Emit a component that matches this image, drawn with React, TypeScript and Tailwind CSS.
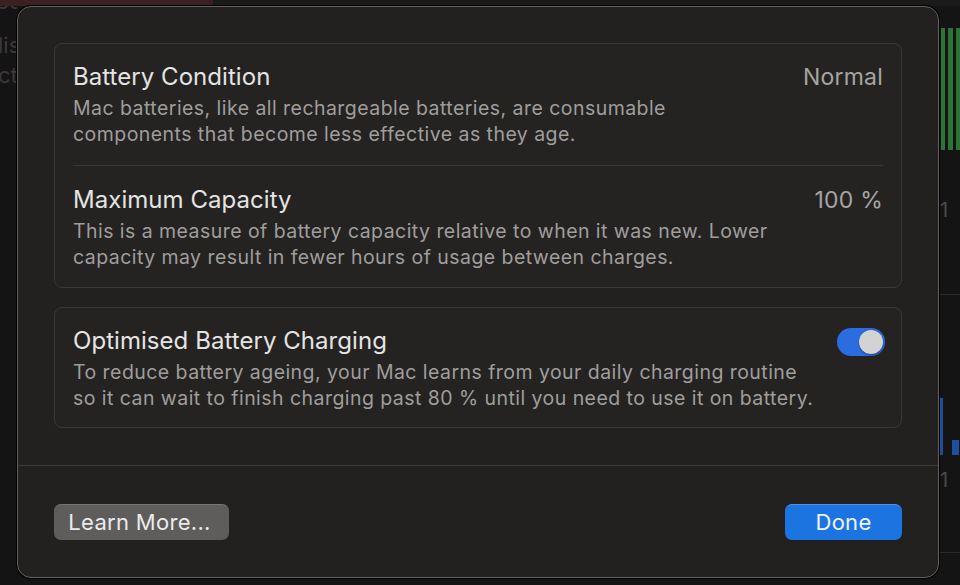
import { useState } from "react";

const font = { fontFamily: "Inter, 'Noto Sans', 'Liberation Sans', sans-serif" };

function Toggle({ on, onChange }: { on: boolean; onChange: () => void }) {
  return (
    <button
      onClick={onChange}
      className={`flex h-[28px] w-[48px] shrink-0 items-center rounded-full p-[2px] ${
        on ? "justify-end bg-[#2b6de0]" : "justify-start bg-[#4a4846]"
      }`}
    >
      <span className="h-[24px] w-[24px] rounded-full bg-[#d3d3d3] shadow-[0_1px_2px_rgba(0,0,0,0.4)]" />
    </button>
  );
}

function Row({
  title,
  text,
  right
}: {
  title: string;
  text: string[];
  right: React.ReactNode;
}) {
  return (
    <div className="flex items-start justify-between gap-6">
      <div>
        <p className="text-[24px] leading-[28px] tracking-[0.05px] text-[#e4e4e3]">{title}</p>
        <div className="mt-[4px] text-[19.5px] leading-[26px] tracking-[0.45px] text-[#9f9e9c]">
          {text.map((line) => (
            <p key={line} className="whitespace-nowrap">{line}</p>
          ))}
        </div>
      </div>
      {right}
    </div>
  );
}

// the window behind the sheet, mostly dimmed
function Backdrop() {
  return (
    <div className="flex h-full flex-col">
      <div className="flex h-[6px] shrink-0">
        <div className="w-[213px] bg-[#3a2020]" />
        <div className="flex-1 bg-[#1b1a1a]" />
      </div>
      <div className="flex flex-1">
        <div className="flex w-[17px] flex-col overflow-hidden text-[22px] leading-[30px] text-[#3b3838]">
          <p className="ml-[-4px] mt-[-20px]">ech</p>
          <p className="ml-[-2px] mt-[14px]">lis</p>
          <p className="ml-[-2px]">ct</p>
        </div>
        <div className="flex-1" />
        <div className="flex w-[21px] flex-col text-[20px] leading-[28px] text-[#4a4a4a]">
          <div className="mt-[22px] flex h-[122px] gap-[3px] pl-[2px]">
            <div className="w-[6px] bg-[#2c7436]" />
            <div className="w-[6px] bg-[#2c7436]" />
            <div className="w-[6px] bg-[#2c7436]" />
          </div>
          <p className="mt-[46px] pl-[1px]">1</p>
          <div className="mt-[70px] h-px bg-[#2a2a2a]" />
          <div className="mt-[103px] flex h-[57px] items-end gap-[9px]">
            <div className="h-full w-[4px] bg-[#1e4f9a]" />
            <div className="h-[15px] w-[7px] bg-[#1e4f9a]" />
          </div>
          <p className="mt-[11px] pl-[1px]">1</p>
          <div className="mt-[58px] h-px bg-[#2a2a2a]" />
        </div>
      </div>
    </div>
  );
}

export default function App() {
  const [optimised, setOptimised] = useState(true);

  return (
    <div className="relative h-[585px] w-[960px] overflow-hidden bg-[#151414]" style={font}>
      <Backdrop />
      <div className="absolute left-[17px] top-[6px] flex h-[572px] w-[922px] flex-col rounded-[14px] border border-[#626160] bg-[#232120] shadow-[0_0_0_1px_#000]">
        <div className="px-[36px] pt-[36px]">
          <section className="rounded-[8px] border border-[#3a3836] bg-[#252322] px-[18px]">
            <div className="border-b border-[#393735] pb-[18px] pt-[19px]">
              <Row
                title="Battery Condition"
                text={[
                  "Mac batteries, like all rechargeable batteries, are consumable",
                  "components that become less effective as they age."
                ]}
                right={<span className="text-[23px] leading-[28px] tracking-[0.2px] text-[#a6a5a3]">Normal</span>}
              />
            </div>
            <div className="pb-[17px] pt-[20px]">
              <Row
                title="Maximum Capacity"
                text={[
                  "This is a measure of battery capacity relative to when it was new. Lower",
                  "capacity may result in fewer hours of usage between charges."
                ]}
                right={<span className="text-[23px] leading-[28px] tracking-[0.2px] text-[#a6a5a3]">100 %</span>}
              />
            </div>
          </section>

          <section className="mt-[19px] rounded-[8px] border border-[#3a3836] bg-[#252322] px-[18px] pb-[16px] pt-[19px]">
            <Row
              title="Optimised Battery Charging"
              text={[
                "To reduce battery ageing, your Mac learns from your daily charging routine",
                "so it can wait to finish charging past 80 % until you need to use it on battery."
              ]}
              right={
                <div className="pt-[1px]">
                  <Toggle on={optimised} onChange={() => setOptimised(!optimised)} />
                </div>
              }
            />
          </section>
        </div>

        <div className="mt-[37px] h-px bg-[#3c3a38]" />

        <div className="flex items-center justify-between px-[36px] pt-[38px]">
          <button className="h-[36px] w-[175px] rounded-[7px] border-t border-[#777675] bg-[#5e5d5c] pr-[4px] text-[22px] tracking-[0.3px] text-[#ebebeb]">
            Learn More...
          </button>
          <button className="h-[36px] w-[117px] rounded-[7px] border-t border-[#4b92f0] bg-[#1c74e0] text-[22px] tracking-[0.3px] text-[#eef4ff]">
            Done
          </button>
        </div>
      </div>
    </div>
  );
}
